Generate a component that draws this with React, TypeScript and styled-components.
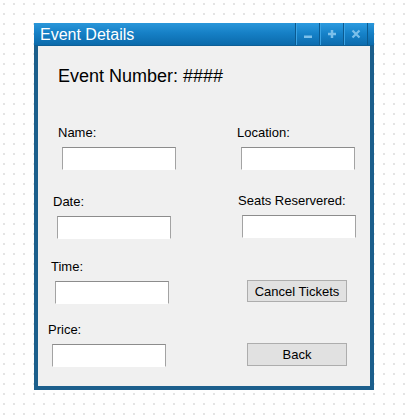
import styled, { createGlobalStyle } from "styled-components";

const GlobalStyle = createGlobalStyle`
  html, body {
    margin: 0;
    padding: 0;
  }
  body {
    min-height: 416px;
    background-color: #ffffff;
    background-image: radial-gradient(circle at 4px 4px, #e4e4e4 0.8px, transparent 1.3px);
    background-size: 10px 10px;
    font-family: "Liberation Sans", Arial, sans-serif;
  }
`;

const leftFields = [
  { label: "Name:", indent: 20, top: 0 },
  { label: "Date:", indent: 15, top: 24 },
  { label: "Time:", indent: 13, top: 20 },
  { label: "Price:", indent: 10, top: 18 },
];

function App() {
  return (
    <>
      <GlobalStyle />
      <Window>
        <TitleBar>
          <Title>Event Details</Title>
          <TitleButtons>
            <TitleButton aria-label="minimize">
              <svg width="10" height="10" viewBox="0 0 10 10">
                <rect x="1" y="6.5" width="8" height="2.5" fill="#7cc0ea" />
              </svg>
            </TitleButton>
            <TitleButton aria-label="maximize">
              <svg width="10" height="10" viewBox="0 0 10 10">
                <path d="M5 1v8M1 5h8" stroke="#7cc0ea" strokeWidth="2.5" />
              </svg>
            </TitleButton>
            <TitleButton aria-label="close">
              <svg width="10" height="10" viewBox="0 0 10 10">
                <path d="M1.5 1.5l7 7M8.5 1.5l-7 7" stroke="#7cc0ea" strokeWidth="2.2" />
              </svg>
            </TitleButton>
          </TitleButtons>
        </TitleBar>
        <Body>
          <Heading>Event Number: ####</Heading>
          <Columns>
            <LeftColumn>
              {leftFields.map((f) => (
                <Field key={f.label} $indent={f.indent} $top={f.top}>
                  <Label>{f.label}</Label>
                  <TextBox />
                </Field>
              ))}
            </LeftColumn>
            <RightColumn>
              <Field $indent={14} $top={0}>
                <Label>Location:</Label>
                <TextBox />
              </Field>
              <Field $indent={15} $top={23}>
                <Label>Seats Reservered:</Label>
                <TextBox />
              </Field>
              <ActionButton $indent={24} $top={42} $height={22}>
                Cancel Tickets
              </ActionButton>
              <ActionButton $indent={24} $top={41} $height={23}>
                Back
              </ActionButton>
            </RightColumn>
          </Columns>
        </Body>
      </Window>
    </>
  );
}

export default App;

const Window = styled.div`
  width: 340px;
  margin: 23px 0 0 34px;
  display: flex;
  flex-direction: column;
`;

const TitleBar = styled.div`
  height: 23px;
  display: flex;
  align-items: stretch;
  background: linear-gradient(#2a97da, #1680c6 45%, #0b6aab);
  border-bottom: 1px solid #0d5f96;
  box-sizing: border-box;
  padding: 0 6px 0 6px;
`;

const Title = styled.div`
  color: #ffffff;
  font-size: 16px;
  line-height: 23px;
`;

const TitleButtons = styled.div`
  margin-left: auto;
  display: flex;
  border-right: 1px solid #0b5a90;
`;

const TitleButton = styled.div`
  width: 23px;
  display: flex;
  align-items: center;
  justify-content: center;
  border-left: 1px solid #0b5a90;
  box-shadow: inset 1px 0 0 #3aa3e4;
  background: linear-gradient(#2c9be0, #1581c8 50%, #0d6cae);
`;

const Body = styled.div`
  height: 320px;
  background: #f0f0f0;
  border: 4px solid #1c5f8c;
  border-top: 0;
  padding-top: 20px;
  box-sizing: content-box;
`;

const Heading = styled.h1`
  margin: 0 0 0 20px;
  font-size: 18px;
  line-height: 21px;
  font-weight: normal;
  color: #000000;
`;

const Columns = styled.div`
  display: flex;
  margin-top: 38px;
`;

const LeftColumn = styled.div`
  width: 185px;
  display: flex;
  flex-direction: column;
`;

const RightColumn = styled.div`
  flex: 1;
  display: flex;
  flex-direction: column;
`;

const Field = styled.div<{ $indent: number; $top: number }>`
  margin-left: ${({ $indent }) => $indent}px;
  margin-top: ${({ $top }) => $top}px;
  display: flex;
  flex-direction: column;
  align-items: flex-start;
`;

const Label = styled.label`
  font-size: 13px;
  line-height: 15px;
  color: #000000;
`;

const TextBox = styled.div`
  width: 114px;
  height: 23px;
  margin: 7px 0 0 4px;
  box-sizing: border-box;
  background: #ffffff;
  border: 1px solid #a3a3a3;
  border-top-color: #8c8c8c;
  border-bottom-color: #ffffff;
`;

const ActionButton = styled.button<{ $indent: number; $top: number; $height: number }>`
  width: 100px;
  height: ${({ $height }) => $height}px;
  margin-left: ${({ $indent }) => $indent}px;
  margin-top: ${({ $top }) => $top}px;
  padding: 0;
  box-sizing: border-box;
  background: #e1e1e1;
  border: 1px solid #adadad;
  font-family: "Liberation Sans", Arial, sans-serif;
  font-size: 13px;
  color: #000000;
`;
